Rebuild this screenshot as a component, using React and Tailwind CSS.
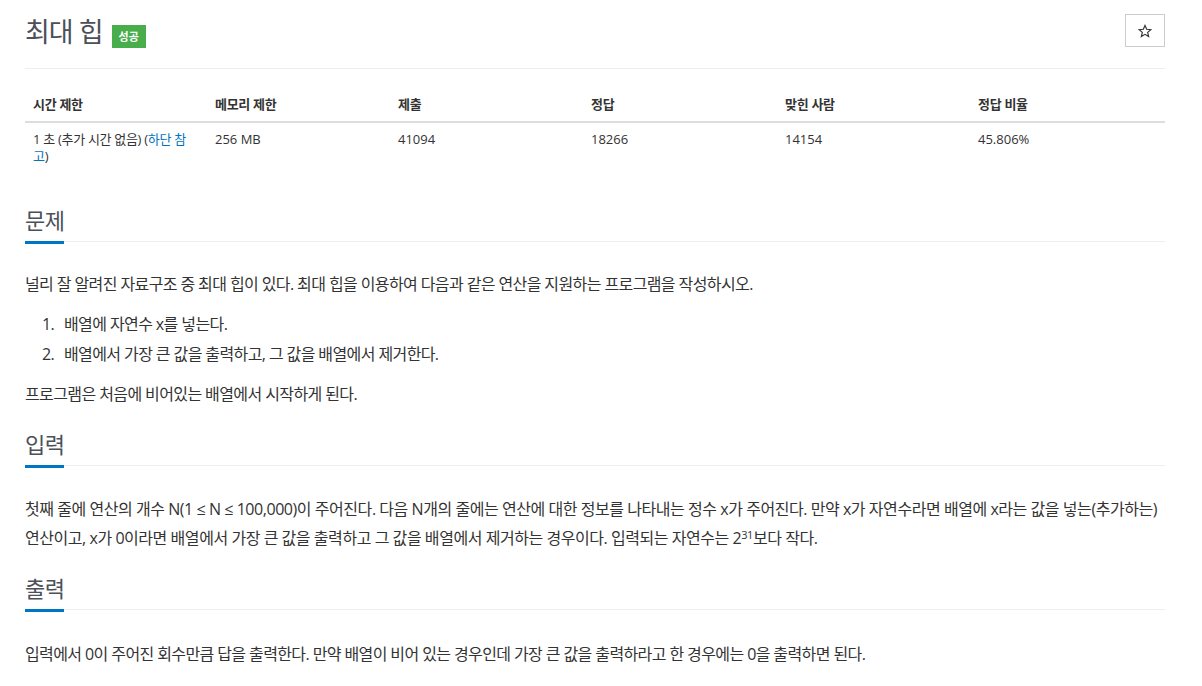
import { useState } from "react";

const stats = [
  { label: "시간 제한", w: "w-[182px]" },
  { label: "메모리 제한", w: "w-[183px]" },
  { label: "제출", w: "w-[193px]" },
  { label: "정답", w: "w-[194px]" },
  { label: "맞힌 사람", w: "w-[193px]" },
  { label: "정답 비율", w: "" },
];

function StarIcon() {
  return (
    <svg width="14" height="14" viewBox="0 0 24 24" fill="none" stroke="#333" strokeWidth="2" strokeLinejoin="miter">
      <path d="M12 2.5l2.9 6.6 7.1.6-5.4 4.7 1.6 7-6.2-3.7-6.2 3.7 1.6-7L2 9.7l7.1-.6z" />
    </svg>
  );
}

function SectionTitle({ children }) {
  return (
    <div className="flex border-b border-[#eee]">
      <h2 className="-mb-[3px] border-b-[3px] border-[#0076c0] pb-[6px] text-[22px] leading-[30px] tracking-[-0.5px] text-[#4b5059]">
        {children}
      </h2>
    </div>
  );
}

export default function App() {
  const [starred, setStarred] = useState(false);

  return (
    <div className="min-h-screen bg-white font-['Open_Sans','Noto_Sans_CJK_KR',sans-serif] text-[#333]">
      <div className="ml-[25px] w-[1140px]">
        <div className="flex items-center justify-between border-b border-[#eee] pb-[20px] pt-[13px]">
          <div className="flex items-center">
            <h1 className="pt-[2px] text-[27px] leading-[33px] tracking-[-1px] text-[#4b5059]">최대 힙</h1>
            <span className="ml-[9px] mt-[12px] bg-[#47ae4b] px-[7px] text-[11px] font-bold leading-[23px] text-white">
              성공
            </span>
          </div>
          <button
            onClick={() => setStarred(!starred)}
            className="flex h-[33px] w-[40px] items-center justify-center border border-[#ccc] bg-white"
          >
            <StarIcon />
          </button>
        </div>

        <table className="mt-[19px] w-full table-fixed border-collapse text-left text-[13px] leading-[17px]">
          <thead>
            <tr className="border-b-2 border-[#ddd]">
              {stats.map((s) => (
                <th key={s.label} className={`${s.w} px-2 py-2 font-bold tracking-[-0.3px]`}>
                  {s.label}
                </th>
              ))}
            </tr>
          </thead>
          <tbody>
            <tr className="align-top">
              <td className="px-2 py-2 tracking-[-0.3px]">
                1 초 (추가 시간 없음) (<span className="text-[#0076c0]">하단 참</span>
                <br />
                <span className="text-[#0076c0]">고</span>)
              </td>
              <td className="px-2 py-2">256 MB</td>
              <td className="px-2 py-2">41094</td>
              <td className="px-2 py-2">18266</td>
              <td className="px-2 py-2">14154</td>
              <td className="px-2 py-2">45.806%</td>
            </tr>
          </tbody>
        </table>

        <section className="mt-[32px]">
          <SectionTitle>문제</SectionTitle>
          <div className="mt-[27px] text-[16px] leading-[30px] tracking-[-0.6px]">
            <p className="mb-[10px]">
              널리 잘 알려진 자료구조 중 최대 힙이 있다. 최대 힙을 이용하여 다음과 같은 연산을 지원하는 프로그램을 작성하시오.
            </p>
            <ol className="mb-[10px] pl-[17px]">
              <li className="flex">
                <span className="w-[22px]">1.</span>
                <span>배열에 자연수 x를 넣는다.</span>
              </li>
              <li className="flex">
                <span className="w-[22px]">2.</span>
                <span>배열에서 가장 큰 값을 출력하고, 그 값을 배열에서 제거한다.</span>
              </li>
            </ol>
            <p className="mb-[10px]">프로그램은 처음에 비어있는 배열에서 시작하게 된다.</p>
          </div>
        </section>

        <section className="mt-[20px]">
          <SectionTitle>입력</SectionTitle>
          <div className="mt-[29px] text-[16px] leading-[29px] tracking-[-0.45px]">
            <p className="mb-[10px]">
              첫째 줄에 연산의 개수 N(1 <span className="font-['Open_Sans','DejaVu_Sans',sans-serif]">≤</span> N{" "}
              <span className="font-['Open_Sans','DejaVu_Sans',sans-serif]">≤</span> 100,000)이 주어진다. 다음 N개의 줄에는 연산에 대한 정보를 나타내는 정수 x가 주어진다. 만약 x가 자연수라면 배열에 x라는 값을 넣는(추가하는) 연산이고, x가 0이라면 배열에서 가장 큰 값을 출력하고 그 값을 배열에서 제거하는 경우이다. 입력되는 자연수는 2
              <sup className="text-[11px] leading-[0]">31</sup>보다 작다.
            </p>
          </div>
        </section>

        <section className="mt-[20px]">
          <SectionTitle>출력</SectionTitle>
          <div className="mt-[29px] text-[16px] leading-[30px] tracking-[-0.6px]">
            <p className="mb-[10px]">
              입력에서 0이 주어진 회수만큼 답을 출력한다. 만약 배열이 비어 있는 경우인데 가장 큰 값을 출력하라고 한 경우에는 0을 출력하면 된다.
            </p>
          </div>
        </section>
      </div>
    </div>
  );
}
